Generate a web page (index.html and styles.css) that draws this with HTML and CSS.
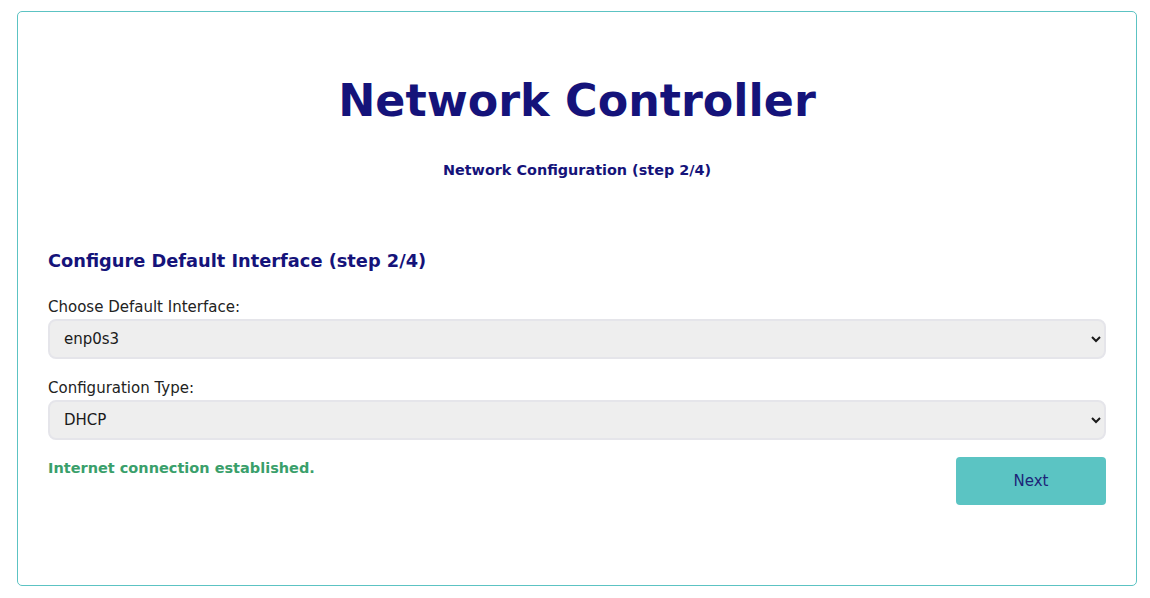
FILE: index.html
```html
<!DOCTYPE html>
<html lang="en">
<head>
<meta charset="utf-8">
<title>Network Controller</title>
<link rel="stylesheet" href="styles.css">
</head>
<body>
  <main class="card">
    <h1 class="title">Network Controller</h1>
    <p class="subtitle">Network Configuration (step 2/4)</p>
    <h2 class="section-title">Configure Default Interface (step 2/4)</h2>
    <label class="field-label" for="iface">Choose Default Interface:</label>
    <select class="field-select" id="iface">
      <option>enp0s3</option>
    </select>
    <label class="field-label" for="ctype">Configuration Type:</label>
    <select class="field-select" id="ctype">
      <option>DHCP</option>
    </select>
    <div class="footer-row">
      <p class="status">Internet connection established.</p>
      <button class="next-btn" type="button">Next</button>
    </div>
  </main>
</body>
</html>
```

FILE: styles.css
```css
html, body {
  margin: 0;
  padding: 0;
  background: #ffffff;
}

body {
  font-family: "DejaVu Sans", "Liberation Sans", sans-serif;
  color: #1a1a1a;
}

.card {
  box-sizing: border-box;
  margin: 11px 13px 0 17px;
  padding: 30px 30px 80px;
  border: 1px solid #5cc3c3;
  border-radius: 5px;
  display: flex;
  flex-direction: column;
}

.title {
  margin: 31px 0 0;
  font-size: 44.4px;
  line-height: 56px;
  font-weight: 700;
  color: #15137a;
  text-align: center;
}

.subtitle {
  margin: 31px 0 0;
  font-size: 14.4px;
  line-height: 20px;
  font-weight: 700;
  color: #15137a;
  text-align: center;
}

.section-title {
  margin: 68px 0 0;
  font-size: 17.8px;
  line-height: 26px;
  font-weight: 700;
  color: #15137a;
}

.field-label {
  display: block;
  margin-top: 23px;
  font-size: 15px;
  line-height: 20px;
  color: #222222;
}

.field-select + .field-label {
  margin-top: 19px;
}

.field-select {
  box-sizing: border-box;
  margin-top: 2px;
  width: 100%;
  height: 40px;
  padding: 0 8px 0 10px;
  font-family: "DejaVu Sans", "Liberation Sans", sans-serif;
  font-size: 15px;
  color: #1a1a1a;
  background-color: #eeeeee;
  border: 2px solid #e5e5ea;
  border-radius: 8px;
  outline: none;
}

.footer-row {
  margin-top: 17px;
  display: flex;
  justify-content: space-between;
  align-items: flex-start;
}

.status {
  margin: 1px 0 0;
  font-size: 14.5px;
  line-height: 20px;
  font-weight: 700;
  color: #3a9f6b;
}

.next-btn {
  width: 150px;
  height: 48px;
  border: none;
  border-radius: 4px;
  background: #5bc4c3;
  color: #1d2478;
  font-family: "DejaVu Sans", "Liberation Sans", sans-serif;
  font-size: 15px;
  cursor: pointer;
}
```
